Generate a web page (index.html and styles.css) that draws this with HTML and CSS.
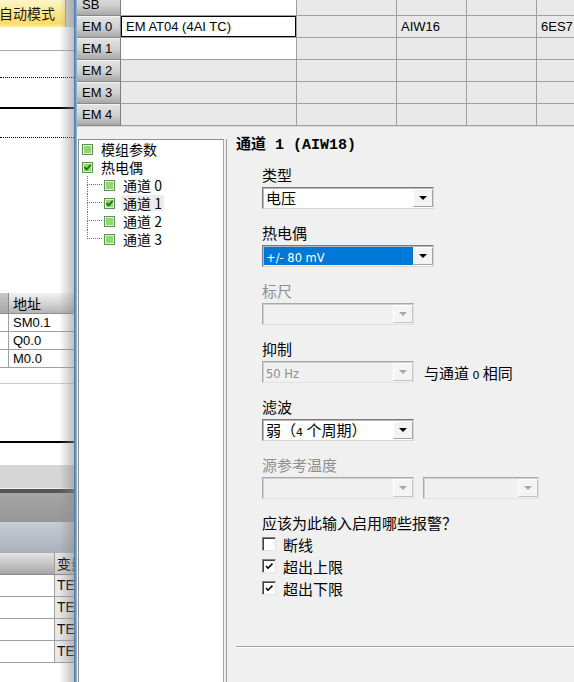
FILE: index.html
```html
<!DOCTYPE html>
<html lang="zh-CN">
<head>
<meta charset="utf-8">
<title>系统块 - 模块配置</title>
<link rel="stylesheet" href="styles.css">
</head>
<body>
<div class="screen">
  <aside class="side">
    <div class="side-toolbar">
      <div class="mode-btn">自动模式</div>
      <div class="tb-grip"></div>
    </div>
    <div class="rule r1"></div>
    <div class="rule r2"></div>
    <div class="rule r3"></div>
    <div class="rule r4"></div>
    <div class="rule r5"></div>
    <div class="sym-table">
      <div class="sym-row sym-head"><div class="c0"></div><div class="c1">地址</div></div>
      <div class="sym-row"><div class="c0"></div><div class="c1">SM0.1</div></div>
      <div class="sym-row"><div class="c0"></div><div class="c1">Q0.0</div></div>
      <div class="sym-row"><div class="c0"></div><div class="c1">M0.0</div></div>
    </div>
    <div class="rule r6"></div>
    <div class="rule r7"></div>
    <div class="rule r8"></div>
    <div class="band b1"></div>
    <div class="band b2"></div>
    <div class="band b3"></div>
    <div class="band b4"></div>
    <div class="var-table">
      <div class="var-row var-head"><div class="v0"></div><div class="v1">变量</div></div>
      <div class="var-row"><div class="v0"></div><div class="v1">TEMP</div></div>
      <div class="var-row"><div class="v0"></div><div class="v1">TEMP</div></div>
      <div class="var-row"><div class="v0"></div><div class="v1">TEMP</div></div>
      <div class="var-row"><div class="v0"></div><div class="v1">TEMP</div></div>
    </div>
  </aside>
  <div class="frame-edge"></div>
  <main class="main">
    <div class="module-grid">
      <div class="mg-row"><div class="hdr">SB</div><div class="cell white"></div><div class="cell"></div><div class="cell"></div><div class="cell"></div><div class="cell"></div></div>
      <div class="mg-row"><div class="hdr">EM 0</div><div class="cell white focus">EM AT04 (4AI TC)</div><div class="cell"></div><div class="cell">AIW16</div><div class="cell"></div><div class="cell">6ES7</div></div>
      <div class="mg-row"><div class="hdr">EM 1</div><div class="cell white"></div><div class="cell"></div><div class="cell"></div><div class="cell"></div><div class="cell"></div></div>
      <div class="mg-row"><div class="hdr">EM 2</div><div class="cell"></div><div class="cell"></div><div class="cell"></div><div class="cell"></div><div class="cell"></div></div>
      <div class="mg-row"><div class="hdr">EM 3</div><div class="cell"></div><div class="cell"></div><div class="cell"></div><div class="cell"></div><div class="cell"></div></div>
      <div class="mg-row"><div class="hdr">EM 4</div><div class="cell"></div><div class="cell"></div><div class="cell"></div><div class="cell"></div><div class="cell"></div></div>
    </div>

    <div class="config">
      <div class="tree">
        <div class="tree-row">
          <svg class="ti" width="11" height="11" viewBox="0 0 11 11"><rect x=".5" y=".5" width="10" height="10" fill="#dcf4cf" stroke="#5e9155"/><rect x="2" y="2" width="7" height="7" fill="#8fd86b"/></svg>
          <span class="tree-text">模组参数</span>
        </div>
        <div class="tree-row">
          <svg class="ti" width="11" height="11" viewBox="0 0 11 11"><rect x=".5" y=".5" width="10" height="10" fill="#dcf4cf" stroke="#5e9155"/><rect x="2" y="2" width="7" height="7" fill="#8fd86b"/><path d="M2.5 5.2 L4.6 7.4 L8.8 2.8" stroke="#1c651c" stroke-width="1.7" fill="none"/></svg>
          <span class="tree-text">热电偶</span>
        </div>
        <div class="tree-row child">
          <span class="conn"><span class="conn-top"></span><span class="conn-bot"></span></span>
          <svg class="ti" width="11" height="11" viewBox="0 0 11 11"><rect x=".5" y=".5" width="10" height="10" fill="#dcf4cf" stroke="#5e9155"/><rect x="2" y="2" width="7" height="7" fill="#8fd86b"/></svg>
          <span class="tree-text">通道 0</span>
        </div>
        <div class="tree-row child">
          <span class="conn"><span class="conn-top"></span><span class="conn-bot"></span></span>
          <svg class="ti" width="11" height="11" viewBox="0 0 11 11"><rect x=".5" y=".5" width="10" height="10" fill="#dcf4cf" stroke="#5e9155"/><rect x="2" y="2" width="7" height="7" fill="#8fd86b"/><path d="M2.5 5.2 L4.6 7.4 L8.8 2.8" stroke="#1c651c" stroke-width="1.7" fill="none"/></svg>
          <span class="tree-text sel">通道 1</span>
        </div>
        <div class="tree-row child">
          <span class="conn"><span class="conn-top"></span><span class="conn-bot"></span></span>
          <svg class="ti" width="11" height="11" viewBox="0 0 11 11"><rect x=".5" y=".5" width="10" height="10" fill="#dcf4cf" stroke="#5e9155"/><rect x="2" y="2" width="7" height="7" fill="#8fd86b"/></svg>
          <span class="tree-text">通道 2</span>
        </div>
        <div class="tree-row child last">
          <span class="conn"><span class="conn-top"></span><span class="conn-bot"></span></span>
          <svg class="ti" width="11" height="11" viewBox="0 0 11 11"><rect x=".5" y=".5" width="10" height="10" fill="#dcf4cf" stroke="#5e9155"/><rect x="2" y="2" width="7" height="7" fill="#8fd86b"/></svg>
          <span class="tree-text">通道 3</span>
        </div>
      </div>

      <div class="splitter"></div>

      <section class="form">
        <h1 class="form-title">通道 1 (AIW18)</h1>
        <div class="fields">
          <div class="field">
            <div class="field-label">类型</div>
            <div class="combo"><div class="combo-value">电压</div><div class="combo-btn"></div></div>
          </div>
          <div class="field">
            <div class="field-label">热电偶</div>
            <div class="combo"><div class="combo-value selected"><span class="latin">+/- 80 mV</span></div><div class="combo-btn"></div></div>
          </div>
          <div class="field">
            <div class="field-label disabled">标尺</div>
            <div class="combo w152 disabled"><div class="combo-value"></div><div class="combo-btn"></div></div>
          </div>
          <div class="field">
            <div class="field-label">抑制</div>
            <div class="field-line">
              <div class="combo w152 disabled"><div class="combo-value"><span class="latin">50 Hz</span></div><div class="combo-btn"></div></div>
              <span class="same-note">与通道 <span class="latin small">0</span> 相同</span>
            </div>
          </div>
          <div class="field">
            <div class="field-label">滤波</div>
            <div class="combo w152"><div class="combo-value">弱（<span class="latin small">4</span> 个周期）</div><div class="combo-btn"></div></div>
          </div>
          <div class="field">
            <div class="field-label disabled">源参考温度</div>
            <div class="field-line gap9">
              <div class="combo w152 disabled"><div class="combo-value"></div><div class="combo-btn"></div></div>
              <div class="combo w116 disabled"><div class="combo-value"></div><div class="combo-btn"></div></div>
            </div>
          </div>
          <div class="alarm-q">应该为此输入启用哪些报警？</div>
          <div class="chk-row"><span class="cb"></span><span>断线</span></div>
          <div class="chk-row"><span class="cb"><svg width="11" height="11" viewBox="0 0 11 11"><path d="M2 5 L4 7.2 L8.5 2.6" stroke="#000" stroke-width="1.6" fill="none"/></svg></span><span>超出上限</span></div>
          <div class="chk-row"><span class="cb"><svg width="11" height="11" viewBox="0 0 11 11"><path d="M2 5 L4 7.2 L8.5 2.6" stroke="#000" stroke-width="1.6" fill="none"/></svg></span><span>超出下限</span></div>
        </div>
        <div class="separator"></div>
      </section>
    </div>
  </main>
</div>
</body>
</html>
```

FILE: styles.css
```css
* { box-sizing: border-box; }

html, body { margin: 0; padding: 0; }

body {
  width: 574px;
  height: 682px;
  overflow: hidden;
  background: #f0f0f0;
  color: #000;
  font-family: "Noto Sans CJK SC", sans-serif;
  font-size: 15px;
}

.screen {
  display: flex;
  width: 574px;
  height: 682px;
  overflow: hidden;
}

/* ---------- left program editor pane ---------- */
.side {
  position: relative;
  width: 74px;
  flex: none;
  display: flex;
  flex-direction: column;
  background: #fff;
  overflow: hidden;
}

/* soft shadow cast on the pane edge */
.side::after {
  content: "";
  position: absolute;
  top: 0;
  right: 0;
  bottom: 0;
  width: 15px;
  background: linear-gradient(to right, rgba(180, 180, 180, 0), rgba(140, 140, 140, 0.55));
  pointer-events: none;
}

.side-toolbar {
  flex: none;
  height: 27px;
  display: flex;
}

.mode-btn {
  width: 66px;
  background: linear-gradient(#fff6cc, #ffe98e 45%, #ffdc6a 88%, #ffeaa6);
  border-right: 1px solid #bba96c;
  font-size: 14px;
  line-height: 27px;
  color: #1a1a1a;
  white-space: nowrap;
  overflow: hidden;
  text-indent: -1px;
}

.tb-grip {
  flex: 1;
  background: #d4d4d4;
}

.rule { flex: none; }
.r1 { height: 24px; border-bottom: 1px solid #a9a9a9; }
.r2 { height: 27px; border-bottom: 1px dotted #000; }
.r3 { height: 31px; border-bottom: 2px solid #000; }
.r4 { height: 29px; border-bottom: 1px dotted #000; }
.r5 { height: 155px; }
.r6 { height: 16px; border-bottom: 1px solid #cdcdcd; }
.r7 { height: 59px; border-bottom: 2px solid #000; }
.r8 { height: 22px; }

.sym-table {
  flex: none;
  font: 13px "Liberation Sans", "Noto Sans CJK SC", sans-serif;
}

.sym-row {
  display: flex;
  height: 18px;
  border-bottom: 1px solid #a0a0a0;
}

.sym-row .c0 {
  width: 9px;
  border-right: 1px solid #a0a0a0;
}

.sym-row .c1 {
  flex: 1;
  padding-left: 4px;
  line-height: 17px;
  white-space: nowrap;
}

.sym-head {
  height: 21px;
  background: linear-gradient(#f2f2f2, #d0d0d0 60%, #b4b4b4);
  border-bottom-color: #8e8e8e;
}

.sym-head .c0 {
  background: linear-gradient(#c8c8c8, #a6a6a6);
  border-right-color: #8a8a8a;
}

.sym-head .c1 {
  font-family: "Noto Sans CJK SC", sans-serif;
  font-size: 14px;
  line-height: 20px;
}

.band { flex: none; }
.b1 { height: 23px; background: #d6d6d6; }
.b2 { height: 5px; background: #545454; border-top: 1px solid #ececf2; }
.b3 { height: 29px; background: linear-gradient(#a6a6a6, #969696); }
.b4 { height: 31px; background: linear-gradient(#c8ccd4, #aab0ba); }

.var-table {
  flex: none;
  font: 14px "Liberation Sans", "Noto Sans CJK SC", sans-serif;
}

.var-row {
  display: flex;
  height: 22px;
  border-bottom: 1px solid #a0a0a0;
}

.var-row .v0 {
  width: 55px;
  border-right: 1px solid #a0a0a0;
}

.var-row .v1 {
  flex: 1;
  padding-left: 2px;
  line-height: 21px;
  white-space: nowrap;
  overflow: hidden;
  background: #e8e8e8;
}

.var-head {
  background: linear-gradient(#e4e4e4, #c0c0c0 60%, #a4a4a4);
  border-bottom-color: #8c8c8c;
}

.var-head .v1 {
  background: linear-gradient(#e6e6e6, #cacaca);
  font-family: "Noto Sans CJK SC", sans-serif;
}

.frame-edge {
  width: 3px;
  flex: none;
  background: linear-gradient(to right, #4d77ab, #6790c2, #a7bcd6);
}

/* ---------- right: module table + configuration ---------- */
.main {
  flex: 1;
  min-width: 0;
  display: flex;
  flex-direction: column;
  background: #f0f0f0;
}

.module-grid {
  flex: none;
  margin-top: -6px;
  font: 13px "Liberation Sans", sans-serif;
}

.mg-row {
  display: grid;
  grid-template-columns: 44px 176px 100px 70px 70px 1fr;
  height: 22px;
}

.mg-row > div {
  border-right: 1px solid #a0a0a0;
  border-bottom: 1px solid #a0a0a0;
  line-height: 21px;
  padding-left: 4px;
  white-space: nowrap;
  overflow: hidden;
  background: #e9e9e9;
}

.mg-row > div:last-child { border-right: none; }

.mg-row > .hdr {
  padding-left: 5px;
  background: linear-gradient(#e4e4e4, #cfcfcf 55%, #a8a8a8);
  border-right-color: #7e7e7e;
  border-bottom-color: #8a8a8a;
  box-shadow: inset 0 1px 0 #f2f2f2;
}

.mg-row > .white { background: #fff; }

.mg-row > .focus {
  padding-left: 5px;
  box-shadow: inset 0 0 0 1px #000;
}

.config {
  flex: 1;
  min-height: 0;
  display: flex;
  padding-top: 12px;
  border-top: 1px solid #d8d8d8;
}

.tree {
  width: 146px;
  flex: none;
  margin-left: 1px;
  padding-left: 3px;
  background: #fff;
  border: 1px solid #8d8d8d;
  border-right-color: #a4a4a4;
  border-bottom: none;
  font-size: 14px;
}

.tree-row {
  display: flex;
  align-items: center;
  height: 18px;
  white-space: nowrap;
  overflow: hidden;
}

.ti {
  flex: none;
  display: block;
}

.tree-text {
  margin-left: 8px;
  line-height: 16px;
}

.tree-text.sel {
  margin-left: 6px;
  padding: 0 2px;
  background: #ececec;
}

.child { padding-left: 5px; }

.conn {
  width: 15px;
  height: 18px;
  display: flex;
  flex-direction: column;
  margin-right: 2px;
}

.conn-top {
  height: 9px;
  border-left: 1px dotted #6f6f6f;
  border-bottom: 1px dotted #6f6f6f;
}

.conn-bot {
  flex: 1;
  border-left: 1px dotted #6f6f6f;
}

.last .conn-bot { border-left-color: transparent; }

.splitter {
  width: 2px;
  flex: none;
}

.form {
  flex: 1;
  min-width: 0;
  display: flex;
  flex-direction: column;
  padding-left: 9px;
  border-left: 1px solid #9c9c9c;
}

.form-title {
  margin: 0;
  font: bold 15px/14px "Liberation Mono", "Noto Sans CJK SC", monospace;
  white-space: nowrap;
}

.fields {
  margin-top: 12px;
  padding-left: 26px;
}

.field { margin-bottom: 14px; }

.field-label {
  height: 20px;
  line-height: 20px;
  margin-bottom: 2px;
}

.field-label.disabled { color: #8f8f8f; }

.field-line {
  display: flex;
  align-items: center;
}

.field-line.gap9 { gap: 9px; }

.same-note {
  margin-left: 10px;
  white-space: nowrap;
}

.combo {
  display: flex;
  width: 172px;
  height: 22px;
  padding: 1px 0 1px 1px;
  background: #fff;
  border: 1px solid;
  border-color: #7a7a7a #d6d6d6 #d6d6d6 #7a7a7a;
  box-shadow: inset 1px 1px 0 #b8b8b8;
}

.combo.w152 { width: 152px; }
.combo.w116 { width: 116px; }

.combo-value {
  flex: 1;
  min-width: 0;
  padding-left: 2px;
  line-height: 18px;
  white-space: nowrap;
  overflow: hidden;
}

.combo-value.selected {
  background: #0078d7;
  color: #fff;
}

.latin {
  font-family: "DejaVu Sans", sans-serif;
  font-size: 11.5px;
}

.latin.small { font-size: 11px; }

.combo-btn {
  flex: none;
  width: 20px;
  height: 18px;
  display: flex;
  align-items: center;
  justify-content: center;
  background: #f3f3f3;
  border: 1px solid;
  border-color: #ffffff #a3a3a3 #a3a3a3 #ffffff;
}

.combo-btn::before {
  content: "";
  border-left: 4px solid transparent;
  border-right: 4px solid transparent;
  border-top: 4px solid #000;
}

.combo.disabled {
  background: #f0f0f0;
  color: #8d8d8d;
  border-color: #a9a9a9 #e2e2e2 #e2e2e2 #a9a9a9;
  box-shadow: inset 1px 1px 0 #d0d0d0;
}

.combo.disabled .combo-btn {
  background: #f4f4f4;
  border-color: #ffffff #c4c4c4 #c4c4c4 #ffffff;
}

.combo.disabled .combo-btn::before { border-top-color: #a6a6a6; }

.alarm-q {
  height: 20px;
  line-height: 20px;
  white-space: nowrap;
}

.chk-row {
  display: flex;
  align-items: center;
  gap: 7px;
  height: 22px;
  white-space: nowrap;
}

.cb {
  width: 14px;
  height: 14px;
  flex: none;
  display: flex;
  align-items: center;
  justify-content: center;
  background: #fff;
  border: 1px solid;
  border-color: #848484 #e4e4e4 #e4e4e4 #848484;
  box-shadow: inset 1px 1px 0 #3f3f3f;
}

.cb svg { display: block; margin: 1px 0 0 1px; }

.separator {
  margin-top: 47px;
  height: 2px;
  border-top: 1px solid #a0a0a0;
  border-bottom: 1px solid #ffffff;
}
```
